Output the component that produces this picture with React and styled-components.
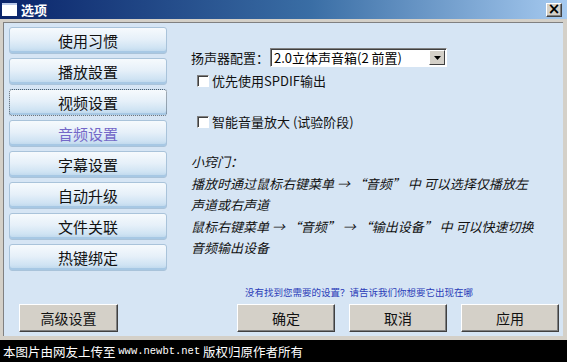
import React from 'react';
import styled, { createGlobalStyle } from 'styled-components';

const GlobalStyle = createGlobalStyle`
  html, body {
    margin: 0;
    padding: 0;
    background: #000;
  }
  body {
    font-family: "Noto Sans CJK SC", "Liberation Sans", sans-serif;
  }
`;

const navItems = ['使用习惯', '播放設置', '视频设置', '音频设置', '字幕设置', '自动升级', '文件关联', '热键绑定'];

const App = () => {
  return (
    <>
      <GlobalStyle />
      <Page>
        <Window>
          <TitleBar>
            <TitleIcon />
            <TitleText>选项</TitleText>
            <CloseButton>×</CloseButton>
          </TitleBar>
          <Frame>
            <Body>
              <Main>
                <Nav>
                  {navItems.map((item, i) => (
                    <NavButton key={item} $focused={i === 2} $active={i === 3}>
                      {item}
                    </NavButton>
                  ))}
                </Nav>
                <Panel>
                  <SelectRow>
                    <Label>扬声器配置：</Label>
                    <Select>
                      <SelectValue>2.0立体声音箱(2 前置)</SelectValue>
                      <SelectArrow>
                        <svg width="7" height="4" viewBox="0 0 7 4">
                          <path d="M0 0h7L3.5 4z" fill="#000" />
                        </svg>
                      </SelectArrow>
                    </Select>
                  </SelectRow>
                  <CheckRow $gap={6}>
                    <CheckBox />
                    优先使用SPDIF输出
                  </CheckRow>
                  <CheckRow $gap={25}>
                    <CheckBox />
                    智能音量放大 (试验阶段)
                  </CheckRow>
                  <Tips>
                    <TipLine>小窍门：</TipLine>
                    <TipLine>播放时通过鼠标右键菜单 → “音频” 中 可以选择仅播放左</TipLine>
                    <TipLine>声道或右声道</TipLine>
                    <TipLine>鼠标右键菜单 → “音频” → “输出设备” 中 可以快速切换</TipLine>
                    <TipLine>音频输出设备</TipLine>
                  </Tips>
                  <HelpLink>没有找到您需要的设置？请告诉我们你想要它出现在哪</HelpLink>
                </Panel>
              </Main>
              <ButtonRow>
                <ClassicButton $width={99}>高级设置</ClassicButton>
                <Spacer />
                <ClassicButton>确定</ClassicButton>
                <ClassicButton>取消</ClassicButton>
                <ClassicButton>应用</ClassicButton>
              </ButtonRow>
            </Body>
          </Frame>
        </Window>
        <Footer>
          本图片由网友上传至 <Mono>www.newbt.net</Mono> 版权归原作者所有
        </Footer>
      </Page>
    </>
  );
};

export default App;

const Page = styled.div`
  width: 567px;
  height: 362px;
  display: flex;
  flex-direction: column;
  overflow: hidden;
`;

const Window = styled.div`
  height: 340px;
  display: flex;
  flex-direction: column;
  background: #d4d0c8;
`;

const TitleBar = styled.div`
  height: 19px;
  flex-shrink: 0;
  display: flex;
  align-items: center;
  padding: 0 5px 0 2px;
  background: linear-gradient(to right, #0a246a 0%, #3a6ea5 55%, #a6caf0 100%);
`;

const TitleIcon = styled.div`
  width: 15px;
  height: 13px;
  background: #fff;
  border-top: 2px solid #b8c8e8;
  box-sizing: border-box;
`;

const TitleText = styled.span`
  margin-left: 4px;
  color: #fff;
  font-size: 13px;
  font-weight: bold;
  flex: 1;
`;

const CloseButton = styled.div`
  width: 16px;
  height: 14px;
  box-sizing: border-box;
  background: #d4d0c8;
  border: 1px solid;
  border-color: #fff #404040 #404040 #fff;
  box-shadow: inset -1px -1px 0 #808080;
  display: flex;
  align-items: center;
  justify-content: center;
  font-family: "DejaVu Sans", sans-serif;
  font-size: 15px;
  font-weight: bold;
  line-height: 1;
  color: #000;
`;

const Frame = styled.div`
  flex: 1;
  display: flex;
  border-top: 3px solid #d4d0c8;
  border-left: 3px solid #d4d0c8;
  border-right: 4px solid #d4d0c8;
  border-bottom: 4px solid #d4d0c8;
  box-shadow: inset 1px 1px 0 #808080;
`;

const Body = styled.div`
  flex: 1;
  display: flex;
  flex-direction: column;
  margin: 1px 0 0 1px;
  padding: 4px 4px 4px 5px;
  background: #d6e5f4;
`;

const Main = styled.div`
  flex: 1;
  display: flex;
`;

const Nav = styled.div`
  width: 158px;
  display: flex;
  flex-direction: column;
  gap: 4px;
`;

const NavButton = styled.div`
  height: 27px;
  box-sizing: border-box;
  display: flex;
  align-items: center;
  justify-content: center;
  font-size: 15px;
  color: ${(p) => (p.$active ? '#7468c8' : '#111')};
  border-radius: 3px;
  border: 1px ${(p) => (p.$focused ? 'dotted #4a5a6a' : 'solid #a9c3da')};
  background: linear-gradient(to bottom, #f6fafd 0%, #e6f0f9 45%, #cfe3f3 80%, #b9d4ea 100%);
  box-shadow: inset 0 -2px 0 #a7c8e4;
`;

const Panel = styled.div`
  flex: 1;
  display: flex;
  flex-direction: column;
  padding: 21px 0 0 24px;
`;

const SelectRow = styled.div`
  display: flex;
  align-items: center;
  height: 19px;
`;

const Label = styled.span`
  font-size: 13px;
  color: #111;
  width: 79px;
`;

const Select = styled.div`
  width: 177px;
  height: 19px;
  box-sizing: border-box;
  display: flex;
  align-items: center;
  background: #fff;
  border: 1px solid;
  border-color: #808080 #fff #fff #808080;
  box-shadow: inset 1px 1px 0 #404040;
`;

const SelectValue = styled.span`
  flex: 1;
  padding-left: 3px;
  font-size: 13px;
  color: #000;
  white-space: nowrap;
`;

const SelectArrow = styled.div`
  width: 16px;
  height: 15px;
  margin-right: 1px;
  box-sizing: border-box;
  background: #d4d0c8;
  border: 1px solid;
  border-color: #fff #404040 #404040 #fff;
  display: flex;
  align-items: center;
  justify-content: center;
`;

const CheckRow = styled.label`
  display: flex;
  align-items: center;
  gap: 3px;
  margin-top: ${(p) => p.$gap}px;
  margin-left: 6px;
  font-size: 13px;
  line-height: 16px;
  color: #111;
  height: 16px;
`;

const CheckBox = styled.span`
  width: 12px;
  height: 12px;
  box-sizing: border-box;
  background: #fff;
  border: 1px solid;
  border-color: #808080 #fff #fff #808080;
  box-shadow: inset 1px 1px 0 #404040;
`;

const Tips = styled.div`
  margin-top: 21px;
  display: flex;
  flex-direction: column;
`;

const TipLine = styled.div`
  font-size: 13px;
  font-style: italic;
  line-height: 21.5px;
  color: #111;
  white-space: nowrap;
`;

const HelpLink = styled.div`
  margin: auto 0 3px 54px;
  font-size: 9.5px;
  line-height: 12px;
  color: #2a3cb8;
  white-space: nowrap;
`;

const ButtonRow = styled.div`
  display: flex;
  gap: 14px;
  padding-left: 10px;
  height: 28px;
  margin-top: 3px;
`;

const Spacer = styled.div`
  flex: 1;
`;

const ClassicButton = styled.div`
  width: ${(p) => p.$width || 98}px;
  box-sizing: border-box;
  display: flex;
  align-items: center;
  justify-content: center;
  font-size: 14px;
  color: #111;
  background: #d4d0c8;
  border: 1px solid;
  border-color: #fff #404040 #404040 #fff;
  box-shadow: inset -1px -1px 0 #808080;
`;

const Footer = styled.div`
  height: 22px;
  display: flex;
  align-items: center;
  padding-left: 3px;
  background: #000;
  color: #fff;
  font-size: 12.5px;
  white-space: pre;
`;

const Mono = styled.span`
  font-family: "Liberation Mono", monospace;
  font-size: 10.5px;
`;
